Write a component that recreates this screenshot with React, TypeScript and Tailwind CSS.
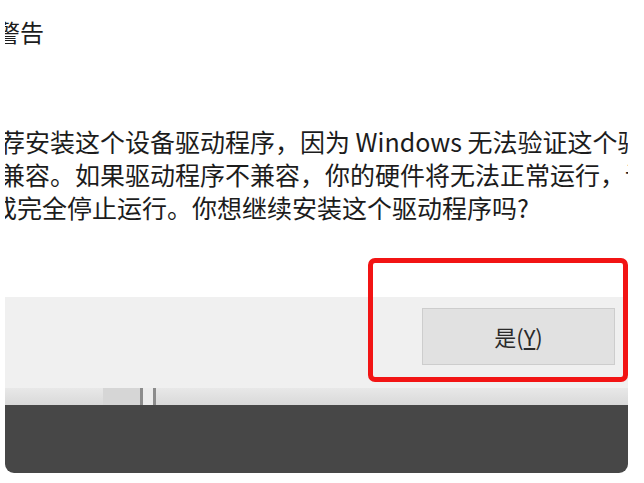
import React from "react";

const FONT = { fontFamily: '"Noto Sans CJK SC", "Noto Sans", sans-serif' };

const lines = [
  { text: "荐安装这个设备驱动程序，因为 Windows 无法验证这个驱动程序", cls: "-ml-[5px]" },
  { text: "兼容。如果驱动程序不兼容，你的硬件将无法正常运行，请", cls: "-ml-[5px]" },
  { text: "或完全停止运行。你想继续安装这个驱动程序吗?", cls: "-ml-[13px]" },
];

export default function App() {
  return (
    <div className="min-h-screen bg-white overflow-hidden" style={FONT}>
      <div className="relative ml-[5px] w-[623px] flex flex-col">
        {/* message area */}
        <div className="h-[297px] overflow-hidden bg-white text-[#1c1c1c]">
          <div className="pt-[16px] -ml-[9px] text-[24px] leading-[32px] whitespace-nowrap">警告</div>
          <div className="mt-[77px] text-[25px] leading-[33px]">
            {lines.map((l) => (
              <div key={l.text} className={`whitespace-nowrap ${l.cls}`}>
                {l.text}
              </div>
            ))}
          </div>
        </div>

        {/* button bar */}
        <div className="h-[91px] bg-[#f0f0f0] flex justify-end items-start pt-[11px] pr-[13px]">
          <button className="w-[193px] h-[57px] bg-[#e1e1e1] border border-[#cdcdcd] text-[22px] text-[#2a2a2a] flex items-center justify-center">
            是(<span className="underline underline-offset-2">Y</span>)
          </button>
        </div>

        {/* window edge strip */}
        <div className="h-[17px] flex bg-gradient-to-b from-[#e8e8e8] to-[#d9d9d9]">
          <div className="w-[98px]" />
          <div className="w-[37px] bg-[#d6d6d6]" />
          <div className="w-[3px] bg-[#8c8c8c]" />
          <div className="w-[10px] bg-[#ececec]" />
          <div className="w-[3px] bg-[#8c8c8c]" />
          <div className="flex-1" />
        </div>

        {/* dark background */}
        <div className="h-[68px] bg-[#474747] rounded-b-[9px]" />

        {/* red annotation */}
        <div className="absolute left-[363px] top-[258px] w-[260px] h-[124px] border-[5px] border-[#f21414] rounded-[7px] pointer-events-none" />
      </div>
    </div>
  );
}
